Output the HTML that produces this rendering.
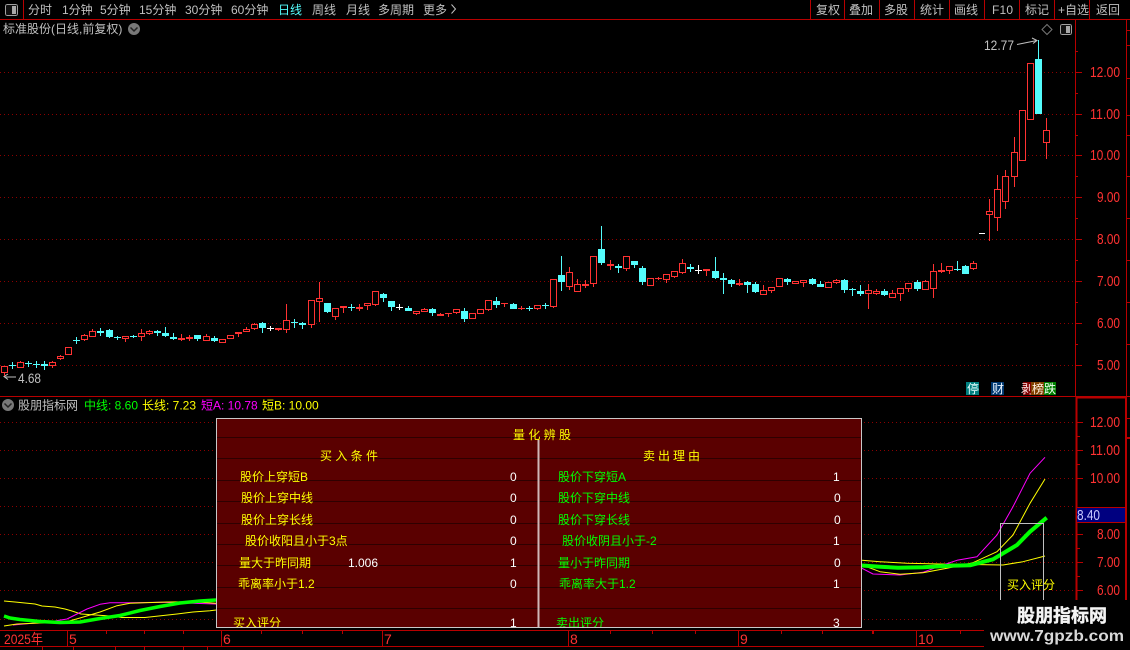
<!DOCTYPE html>
<html><head><meta charset="utf-8">
<style>
html,body{margin:0;padding:0;background:#000;width:1130px;height:650px;overflow:hidden}
svg{display:block}
text{font-family:"Liberation Sans","WenQuanYi Zen Hei","Noto Sans CJK SC",sans-serif;font-size:12px;fill:#c0c0c0}
.ax{fill:#ff3232;font-size:15px;text-anchor:end}
.y{fill:#ffff00}.g{fill:#00ff00}.w{fill:#fff}
</style></head><body>
<svg width="1130" height="650" viewBox="0 0 1130 650" xmlns="http://www.w3.org/2000/svg">
<rect width="1130" height="650" fill="#000"/>
<!-- grid -->
<g stroke="#8c0000" stroke-dasharray="1 3" fill="none" shape-rendering="crispEdges">
<path d="M0 72.5H1075M0 114.5H1075M0 155.5H1075M0 197.5H1075M0 239.5H1075M0 281.5H1075M0 323.5H1075M0 365.5H1075"/>
<path d="M0 422.5H1075M0 450.5H1075M0 478.5H1075M0 506.5H1075M0 534.5H1075M0 562.5H1075M0 590.5H1075M0 619.5H1075"/>
</g>
<!-- frame lines -->
<g stroke="#b80000" fill="none" shape-rendering="crispEdges">
<path d="M0 19.5H1130M0 396.5H1130M0 630.5H1076M0 646.5H1076M23.5 0V19M810.5 0V19M844.5 0V19M879.5 0V19M914.5 0V19M949.5 0V19M984.5 0V19M1019.5 0V19M1054.5 0V19M1089.5 0V19"/>
<path d="M1075.5 19V396" />
<path d="M1076.5 397V646" stroke-width="2"/>
<path d="M1076 397.5H1126" stroke-width="2"/>
<path d="M1126.5 19V396"/>
<path d="M1126 397V600" stroke-width="2"/>
<path d="M1075 72.5h7M1075 114.5h7M1075 155.5h7M1075 197.5h7M1075 239.5h7M1075 281.5h7M1075 323.5h7M1075 365.5h7M1075 93.5h3M1075 135.5h3M1075 176.5h3M1075 218.5h3M1075 260.5h3M1075 302.5h3M1075 344.5h3M1075 51.5h3"/>
<path d="M1077 422.5h6M1077 450.5h6M1077 478.5h6M1077 534.5h6M1077 562.5h6M1077 590.5h6M1077 436.5h3M1077 464.5h3M1077 548.5h3M1077 576.5h3"/>
<path d="M1127 30.5h3M1127 45.5h3M1127 78.5h3M1127 115.5h3M1127 135.5h3M1127 176.5h3M1127 218.5h3M1127 260.5h3M1127 302.5h3M1127 344.5h3M1127 418.5h3M1127 437.5h3M1127 438.5h3"/>
<path d="M67.5 631V646M221.5 631V646M382.5 631V646M568.5 631V646M738.5 631V646M916.5 631V646M106.5 631v3M144.5 631v3M183.5 631v3M261.5 631v3M302.5 631v3M342.5 631v3M610.5 631v3M652.5 631v3M695.5 631v3M781.5 631v3M822.5 631v3M872.5 631v3M873.5 631v3M960.5 631v3M42.5 647v3M73.5 647v3M115.5 647v3M144.5 647v3M183.5 647v3M207.5 647v3"/>
</g>
<!-- toolbar -->
<g transform="translate(5,4)" shape-rendering="crispEdges"><rect x=".5" y=".5" width="12" height="11" rx="2" fill="#111" stroke="#a0a0a0"/><rect x="7" y="2" width="4" height="8" fill="#a8a8a8"/></g>
<text x="28" y="14">分时</text><text x="62" y="14">1分钟</text><text x="100" y="14">5分钟</text><text x="139" y="14">15分钟</text><text x="185" y="14">30分钟</text><text x="231" y="14">60分钟</text>
<text x="278" y="14" style="fill:#54fcfc">日线</text><text x="312" y="14">周线</text><text x="346" y="14">月线</text><text x="378" y="14">多周期</text><text x="423" y="14">更多</text>
<path d="M451.5 4.5l4 4.5-4 4.5" fill="none" stroke="#c0c0c0"/>
<text x="816" y="14">复权</text><text x="849" y="14">叠加</text><text x="884" y="14">多股</text><text x="920" y="14">统计</text><text x="954" y="14">画线</text><text x="992" y="14" textLength="21">F10</text><text x="1025" y="14">标记</text><text x="1058" y="14">+自选</text><text x="1096" y="14">返回</text>
<!-- title -->
<text x="3" y="33">标准股份(日线,前复权)</text>
<circle cx="134" cy="29" r="6" fill="#787878"/><path d="M130.5 27.5l3.5 3.5 3.5-3.5" fill="none" stroke="#222" stroke-width="1.5"/>
<path d="M1047 24.5l5 5-5 5-5-5z" fill="none" stroke="#777"/>
<g transform="translate(1060,24)" shape-rendering="crispEdges"><rect x=".5" y=".5" width="11" height="10" rx="2" fill="#111" stroke="#a0a0a0"/><rect x="6" y="2" width="4" height="7" fill="#a8a8a8"/></g>
<text x="984" y="50" textLength="30" lengthAdjust="spacingAndGlyphs" style="font-size:14px">12.77</text>
<path d="M1017 44.5l20-4M1032 38l5 2.500-4 3" fill="none" stroke="#c0c0c0"/>
<text x="18" y="383" textLength="23" lengthAdjust="spacingAndGlyphs" style="font-size:14px">4.68</text>
<path d="M16 377H5M8 374l-4 2.500 4 3" fill="none" stroke="#c0c0c0"/>
<!-- candles: red wicks -->
<g shape-rendering="crispEdges">
<path fill="none" stroke="#ff3232" d="M4.5 366V376M20.5 361V368M52.500 361V368M60.500 355V360M84.500 334V341M92.500 329V337M125.500 336V342M141.500 329V341M149.500 330V335M206.500 334V341M246.500 327V332M254.500 323V330M286.500 304V333M311.500 300V328M319.500 282V322M335.500 308V320M367.500 303V310M375.500 291V306M416.500 311V315M424.500 308V312M456.500 309V314M488.500 300V311M537.500 305V310M553.500 279V308M569.500 267V290M577.500 279V292M593.500 256V287M626.500 256V271M666.500 274V283M674.500 271V278M682.500 259V274M763.500 285V295M771.500 287V293M803.500 280V287M836.500 279V284M868.500 284V309M876.500 289V295M892.500 290V298M900.500 288V301M908.500 283V292M925.500 280V290M933.500 264V298M949.500 266V274M973.500 261V270M989.500 199V241M997.500 175V231M1005.500 170V209M1014.500 137V187M1046.500 118V159M181.500 334V341M189.500 335V341M238.500 332V337M278.500 328V331M343.500 306V313M359.500 304V311M440.500 313V316M448.500 313V317M504.500 303V307M521.500 306V310M585.500 280V288M610.500 260V270M658.500 277V280M706.500 269V276M739.500 279V286M941.500 263V273"/>
<path fill="#000" stroke="#ff3232" d="M1.500 366.500h6v6h-6zM17.500 362.500h6v5h-6zM49.500 362.500h6v3h-6zM57.500 356.500h6v2h-6zM65.500 347.500h6v7h-6zM81.500 335.500h6v4h-6zM89.500 331.500h6v5h-6zM122.500 336.500h6v2h-6zM138.500 333.500h6v3h-6zM146.500 331.500h6v2h-6zM203.500 336.500h6v4h-6zM219.500 339.500h6v3h-6zM227.500 335.500h6v3h-6zM243.500 329.500h6v2h-6zM251.500 324.500h6v4h-6zM283.500 320.500h6v9h-6zM308.500 300.500h6v24h-6zM316.500 298.500h6v3h-6zM332.500 308.500h6v8h-6zM364.500 303.500h6v2h-6zM372.500 291.500h6v13h-6zM413.500 311.500h6v2h-6zM421.500 309.500h6v2h-6zM453.500 309.500h6v3h-6zM469.500 313.500h6v5h-6zM477.500 309.500h6v4h-6zM485.500 300.500h6v9h-6zM534.500 305.500h6v3h-6zM550.500 279.500h6v27h-6zM566.500 272.500h6v14h-6zM574.500 284.500h6v7h-6zM590.500 256.500h6v27h-6zM623.500 256.500h6v12h-6zM647.500 278.500h6v7h-6zM663.500 274.500h6v5h-6zM671.500 271.500h6v5h-6zM679.500 263.500h6v9h-6zM760.500 290.500h6v4h-6zM768.500 287.500h6v3h-6zM776.500 278.500h6v8h-6zM792.500 281.500h6v2h-6zM800.500 280.500h6v2h-6zM825.500 282.500h6v5h-6zM833.500 280.500h6v2h-6zM865.500 290.500h6v3h-6zM873.500 291.500h6v2h-6zM889.500 293.500h6v4h-6zM897.500 288.500h6v5h-6zM905.500 283.500h6v5h-6zM922.500 281.500h6v8h-6zM930.500 271.500h6v17h-6zM946.500 266.500h6v4h-6zM970.500 263.500h6v5h-6zM986.500 211.500h6v3h-6zM994.500 189.500h6v28h-6zM1002.500 176.500h6v25h-6zM1011.500 152.500h6v24h-6zM1019.500 110.500h6v50h-6zM1027.500 63.500h6v56h-6zM1043.500 130.500h6v12h-6z"/>
<path fill="#ff3232" d="M178 338h7v2h-7zM186 337h7v2h-7zM235 332h7v2h-7zM275 328h7v2h-7zM340 306h7v2h-7zM356 307h7v2h-7zM437 314h7v2h-7zM445 313h7v1h-7zM501 303h7v1h-7zM518 308h7v1h-7zM582 284h7v2h-7zM607 264h7v2h-7zM655 278h7v1h-7zM703 269h7v2h-7zM736 283h7v2h-7zM938 270h7v2h-7z"/>
<!-- cyan -->
<path fill="none" stroke="#54fcfc" d="M12.500 362V369M28.500 361V367M36.500 361V368M44.500 361V370M76.500 337V344M100.500 328V336M109.500 329V338M117.500 336V340M133.500 335V338M157.500 330V336M165.500 327V337M173.500 333V340M197.500 335V341M214.500 336V342M262.500 322V333M294.500 319V328M302.500 322V329M327.500 303V313M351.500 304V311M383.500 293V302M391.500 301V311M408.500 306V311M432.500 308V316M464.500 308V322M496.500 297V308M513.500 303V309M529.500 306V311M545.500 303V309M561.500 256V291M601.500 226V265M618.500 264V273M634.500 261V268M642.500 266V285M690.500 264V272M715.500 257V279M723.500 273V294M731.500 279V287M747.500 281V293M755.500 282V293M787.500 278V285M812.500 278V285M820.500 281V287M844.500 279V293M852.500 288V296M860.500 285V296M884.500 289V296M917.500 280V291M957.500 261V271M965.500 265V274M1038.500 40V114"/>
<path fill="#54fcfc" d="M9 365h7v1h-7zM25 363h7v1h-7zM33 364h7v1h-7zM41 364h7v2h-7zM73 340h7v1h-7zM97 331h7v2h-7zM106 330h7v7h-7zM114 337h7v1h-7zM130 336h7v1h-7zM154 331h7v2h-7zM162 333h7v3h-7zM170 337h7v2h-7zM194 335h7v4h-7zM211 338h7v3h-7zM259 323h7v5h-7zM291 322h7v1h-7zM299 323h7v2h-7zM324 303h7v9h-7zM348 307h7v1h-7zM380 294h7v4h-7zM388 301h7v6h-7zM405 308h7v3h-7zM429 309h7v4h-7zM461 311h7v8h-7zM493 301h7v4h-7zM510 304h7v5h-7zM526 308h7v1h-7zM542 305h7v1h-7zM558 275h7v7h-7zM598 249h7v14h-7zM615 266h7v2h-7zM631 261h7v4h-7zM639 268h7v14h-7zM687 267h7v2h-7zM712 271h7v7h-7zM720 278h7v2h-7zM728 280h7v4h-7zM744 282h7v3h-7zM752 284h7v8h-7zM784 279h7v3h-7zM809 279h7v5h-7zM817 284h7v3h-7zM841 280h7v10h-7zM849 289h7v1h-7zM857 291h7v3h-7zM881 291h7v4h-7zM914 282h7v7h-7zM954 269h7v1h-7zM962 266h7v8h-7zM1035 59h7v55h-7z"/>
<path fill="none" stroke="#fff" d="M270.500 326V331M399.500 304V310M698.500 265V274"/>
<path fill="#fff" d="M267 328h7v1h-7zM396 307h7v1h-7zM695 270h7v1h-7zM979 233h6v1h-6z"/>
</g>
<!-- tags -->
<rect x="966" y="382" width="13" height="13" fill="#008080"/><text x="967" y="393" style="fill:#e8ffff">停</text>
<rect x="991" y="382" width="13" height="13" fill="#003870"/><text x="992" y="393" style="fill:#e8f4ff">财</text>
<rect x="1023" y="382" width="9" height="13" fill="#800000"/><text x="1021" y="393" style="fill:#ffe8e8">剥</text>
<rect x="1031" y="382" width="13" height="13" fill="#804000"/><text x="1032" y="393" style="fill:#fff0e0">榜</text>
<rect x="1044" y="382" width="12" height="13" fill="#008000"/><text x="1044" y="393" style="fill:#f0fff0">跌</text>
<!-- axis labels -->
<text class="ax" x="1120" y="77" textLength="30" lengthAdjust="spacingAndGlyphs">12.00</text>
<text class="ax" x="1120" y="119" textLength="30" lengthAdjust="spacingAndGlyphs">11.00</text>
<text class="ax" x="1120" y="160" textLength="30" lengthAdjust="spacingAndGlyphs">10.00</text>
<text class="ax" x="1120" y="202" textLength="23" lengthAdjust="spacingAndGlyphs">9.00</text>
<text class="ax" x="1120" y="244" textLength="23" lengthAdjust="spacingAndGlyphs">8.00</text>
<text class="ax" x="1120" y="286" textLength="23" lengthAdjust="spacingAndGlyphs">7.00</text>
<text class="ax" x="1120" y="328" textLength="23" lengthAdjust="spacingAndGlyphs">6.00</text>
<text class="ax" x="1120" y="370" textLength="23" lengthAdjust="spacingAndGlyphs">5.00</text>
<text class="ax" x="1120" y="427" textLength="30" lengthAdjust="spacingAndGlyphs">12.00</text>
<text class="ax" x="1120" y="455" textLength="30" lengthAdjust="spacingAndGlyphs">11.00</text>
<text class="ax" x="1120" y="483" textLength="30" lengthAdjust="spacingAndGlyphs">10.00</text>
<text class="ax" x="1120" y="539" textLength="23" lengthAdjust="spacingAndGlyphs">8.00</text>
<text class="ax" x="1120" y="567" textLength="23" lengthAdjust="spacingAndGlyphs">7.00</text>
<text class="ax" x="1120" y="595" textLength="23" lengthAdjust="spacingAndGlyphs">6.00</text>
<rect x="1077" y="507" width="48" height="16" fill="#000080"/>
<path d="M1077 507.500h48M1077 522.500h48" stroke="#b80000" shape-rendering="crispEdges"/>
<text x="1077" y="520" textLength="23" lengthAdjust="spacingAndGlyphs" style="fill:#c8c8ff;font-size:15px">8.40</text>
<!-- indicator header -->
<circle cx="8" cy="405" r="6" fill="#787878"/><path d="M4.500 403.500l3.500 3.500 3.500-3.500" fill="none" stroke="#222" stroke-width="1.500"/>
<text x="18" y="409.500">股朋指标网</text>
<text x="84" y="409.500" class="g">中线: 8.60</text>
<text x="142" y="409.500" class="y">长线: 7.23</text>
<text x="201" y="409.500" style="fill:#ff00ff">短A: 10.78</text>
<text x="262" y="409.500" class="y">短B: 10.00</text>
<!-- indicator lines left -->
<g fill="none" stroke-linejoin="round">
<polyline stroke="#ffff00" points="4,601 15,602 25,603 35,604 42,606 55,607 65,609 72,611 81,614 110,616 122,617.500 145,617.500 161,615.700 177,614 193,612 210,610.700 216,610"/>
<polyline stroke="#ff00ff" points="13,625 24,624 50,621.700 67,619 87,609 100,604.300 110,602.700 130,602.700 161,602.300 193,603.300 216,604"/>
<polyline stroke="#ffff00" points="4,626 17,624 40,623 63,622.700 80,618 100,612 117,605.700 130,603.300 167,602 193,601.700 216,603.300"/>
<polyline stroke="#00ff00" stroke-width="3.500" points="4,616 10,618 20,619.500 40,621.500 60,622.500 80,622 100,618.500 120,615.500 140,610.500 160,606.500 180,603 200,601 216,600"/>
<!-- right -->
<polyline stroke="#ffff00" points="862,560.300 880,561.700 907,563.300 940,564 1003,565 1023,561.700 1045,556"/>
<polyline stroke="#ff00ff" points="862,568.300 873,574 900,575 923,572.300 940,566 957,560.300 977,556.700 997,535 1013,506.700 1030,473.300 1045,457.300"/>
<polyline stroke="#ffff00" points="862,565 880,571.700 900,574.300 923,572.700 947,568.300 973,562.700 997,551.700 1013,535 1030,503.300 1045,479"/>
<polyline stroke="#00ff00" stroke-width="4" points="862,565.500 880,566.700 898,567.700 923,567.300 950,565.700 970,565.300 993,559.300 1017,545 1030,531.700 1046.700,517.700"/>
</g>
<path d="M1000.500 600V523.500H1043.500V600" fill="none" stroke="#c0c0c0" shape-rendering="crispEdges"/>
<text x="1007" y="589" class="y">买入评分</text>
<!-- date axis -->
<text x="4" y="644" textLength="39" lengthAdjust="spacingAndGlyphs" style="fill:#ff3232;font-size:14px">2025年</text>
<text x="69" y="644" style="fill:#ff3232;font-size:14px">5</text>
<text x="223" y="644" style="fill:#ff3232;font-size:14px">6</text>
<text x="384" y="644" style="fill:#ff3232;font-size:14px">7</text>
<text x="570" y="644" style="fill:#ff3232;font-size:14px">8</text>
<text x="740" y="644" style="fill:#ff3232;font-size:14px">9</text>
<text x="918" y="644" style="fill:#ff3232;font-size:14px">10</text>
<!-- popup -->
<rect x="216.500" y="418.500" width="645" height="209" fill="#5a0000" stroke="#c8c8c8" shape-rendering="crispEdges"/>
<path d="M217 437.500H861M217 458.500H861M217 480.500H861M217 501.500H861M217 523.500H861M217 544.500H861M217 565.500H861M217 587.500H861M217 608.500H861" stroke="#2e0000" shape-rendering="crispEdges"/>
<path d="M538.500 440V627" stroke="#d0b8b8" stroke-width="2" shape-rendering="crispEdges"/>
<svg x="217" y="419" width="644" height="208" viewBox="217 419 644 208">
<text x="513" y="439" class="y" textLength="58">量化辨股</text>
<text x="320" y="460" class="y" textLength="58">买入条件</text>
<text x="643" y="460" class="y" textLength="57">卖出理由</text>
<text x="240" y="481" class="y">股价上穿短B</text><text x="241" y="502" class="y">股价上穿中线</text><text x="241" y="524" class="y">股价上穿长线</text><text x="245" y="545" class="y">股价收阳且小于3点</text><text x="239" y="567" class="y">量大于昨同期</text><text x="238" y="588" class="y">乖离率小于1.2</text><text x="233" y="627" class="y">买入评分</text>
<text x="348" y="567" class="w">1.006</text>
<text x="510" y="481" class="w">0</text><text x="510" y="502" class="w">0</text><text x="510" y="524" class="w">0</text><text x="510" y="545" class="w">0</text><text x="510" y="567" class="w">1</text><text x="510" y="588" class="w">0</text><text x="510" y="627" class="w">1</text>
<text x="558" y="481" class="g">股价下穿短A</text><text x="558" y="502" class="g">股价下穿中线</text><text x="558" y="524" class="g">股价下穿长线</text><text x="562" y="545" class="g">股价收阴且小于-2</text><text x="558" y="567" class="g">量小于昨同期</text><text x="559" y="588" class="g">乖离率大于1.2</text><text x="556" y="627" class="g">卖出评分</text>
<text x="833" y="481" class="w">1</text><text x="834" y="502" class="w">0</text><text x="834" y="524" class="w">0</text><text x="833" y="545" class="w">1</text><text x="834" y="567" class="w">0</text><text x="833" y="588" class="w">1</text><text x="833" y="627" class="w">3</text>
</svg>
<!-- watermark -->
<rect x="984" y="600" width="146" height="50" fill="#000"/>
<text x="1017" y="622" textLength="90" lengthAdjust="spacingAndGlyphs" style="fill:#f4f4f4;font-size:18px;font-weight:bold;stroke:#f4f4f4;stroke-width:.4">股朋指标网</text>
<text x="990" y="641" textLength="134" lengthAdjust="spacingAndGlyphs" style="fill:#d8d8d8;font-size:16px;font-weight:bold">www.7gpzb.com</text>
</svg>
</body></html>
